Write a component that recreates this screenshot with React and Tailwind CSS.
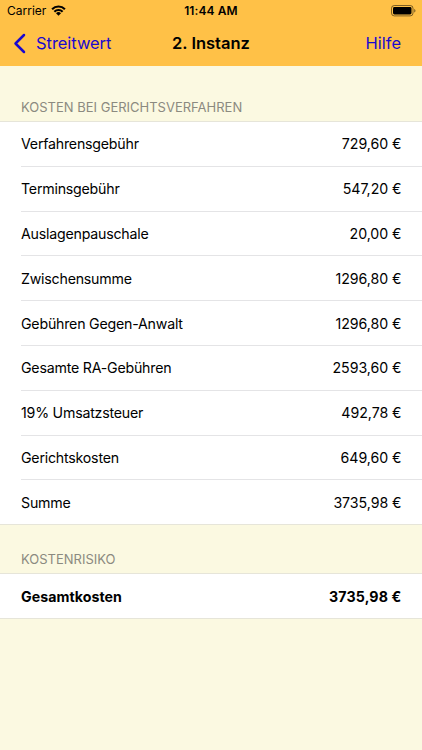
const costs = [
  ['Verfahrensgebühr', '729,60 €'],
  ['Terminsgebühr', '547,20 €'],
  ['Auslagenpauschale', '20,00 €'],
  ['Zwischensumme', '1296,80 €'],
  ['Gebühren Gegen-Anwalt', '1296,80 €'],
  ['Gesamte RA-Gebühren', '2593,60 €'],
  ['19% Umsatzsteuer', '492,78 €'],
  ['Gerichtskosten', '649,60 €'],
  ['Summe', '3735,98 €'],
];

function StatusBar() {
  return (
    <div className="grid h-[22px] grid-cols-3 items-center px-[6px] text-[12px] leading-[22px]">
      <div className="flex items-center gap-[5px] pl-px">
        <span>Carrier</span>
        <svg className="mb-px" width="15" height="11" viewBox="0 0 16 12" fill="none" stroke="#000" strokeWidth="2.3">
          <path d="M1 4.6a9.8 9.8 0 0 1 14 0" />
          <path d="M3.5 7.3a6.3 6.3 0 0 1 9 0" />
          <path d="M8 11.8 5.3 9.1a3.8 3.8 0 0 1 5.4 0z" fill="#000" stroke="none" />
        </svg>
      </div>
      <span className="text-center font-semibold tracking-[0.1px]">11:44 AM</span>
      <svg className="justify-self-end" width="25" height="12" viewBox="0 0 25 12">
        <rect x="0.5" y="0.5" width="21.5" height="10.4" rx="2.8" fill="none" stroke="#000" strokeOpacity="0.5" />
        <rect x="2" y="2" width="18.5" height="7.4" rx="1.4" />
        <path d="M23.2 4v3.6c.8-.3 1.3-1 1.3-1.8s-.5-1.5-1.3-1.8z" fillOpacity="0.5" />
      </svg>
    </div>
  );
}

function NavBar() {
  return (
    <nav className="grid h-[44px] grid-cols-3 items-center pb-[2px] text-[16.5px] leading-[42px]">
      <a className="flex items-center gap-[10px] pl-[13px] text-[#1a08cf]">
        <svg width="13" height="21" viewBox="0 0 13 21" fill="none" stroke="currentColor" strokeWidth="2.5" strokeLinecap="round" strokeLinejoin="round">
          <path d="M11 2 2.5 10.5 11 19" />
        </svg>
        <span className="tracking-[-0.05px]">Streitwert</span>
      </a>
      <h1 className="text-center font-semibold">2. Instanz</h1>
      <a className="pr-[21px] text-right text-[#1a08cf]">Hilfe</a>
    </nav>
  );
}

function Row({ label, value, last, bold }) {
  return (
    <li className={`h-[44.8px] ${bold ? 'font-bold' : 'tracking-[-0.05px]'} ${last ? 'border-b border-[#e6e5d9]' : ''}`}>
      <div className={`ml-[21px] flex h-full items-center justify-between pr-[20.5px] pt-px ${last ? '' : 'border-b border-[#e4e4e6]'}`}>
        <span className={bold ? 'tracking-[0.05px]' : 'tracking-[-0.22px]'}>{label}</span>
        <span className={bold ? 'tracking-[0.15px]' : ''}>{value}</span>
      </div>
    </li>
  );
}

export default function App() {
  return (
    <div className="h-[750px] w-[422px] overflow-hidden bg-[#fbf9e1] font-['Inter',sans-serif] text-[14.2px] leading-[20px] text-black">
      <header className="h-[66px] bg-[#ffc147]">
        <StatusBar />
        <NavBar />
      </header>
      <section>
        <h2 className="h-[55px] pl-[21px] pt-[32px] text-[13px] leading-[18px] text-[#8b8a80]">KOSTEN BEI GERICHTSVERFAHREN</h2>
        <ul className="border-t border-[#e6e5d9] bg-white">
          {costs.map(([label, value], i) => (
            <Row key={label} label={label} value={value} last={i === costs.length - 1} />
          ))}
        </ul>
      </section>
      <section>
        <h2 className="h-[48px] pl-[21px] pt-[25px] text-[13px] leading-[18px] text-[#8b8a80]">KOSTENRISIKO</h2>
        <ul className="border-t border-[#e6e5d9] bg-white">
          <Row label="Gesamtkosten" value="3735,98 €" last bold />
        </ul>
      </section>
    </div>
  );
}
